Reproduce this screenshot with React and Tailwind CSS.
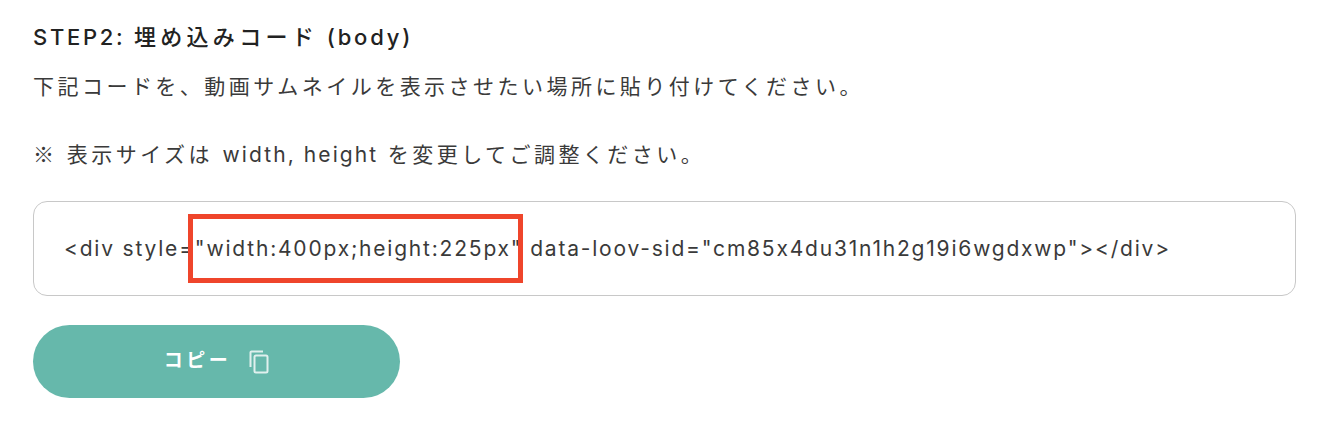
import React from "react";

const App = () => {
  return (
    <div className="w-[1328px] h-[430px] bg-white pl-[33px] pr-[32px] pt-[22px] text-[#3a3a3a] font-['Inter','Noto_Sans_CJK_JP',sans-serif] overflow-hidden">
      <h2 className="text-[22px] leading-[30px] font-medium text-[#222]">
        <span className="tracking-[2.7px]">STEP2: </span>
        <span className="tracking-[4.3px]">埋め込みコード</span>
        <span className="tracking-[2.8px]"> (body)</span>
      </h2>
      <p className="mt-[21px] text-[21px] leading-[28px] tracking-[3.47px]">
        下記コードを、動画サムネイルを表示させたい場所に貼り付けてください。
      </p>
      <p className="mt-[38px] h-[28px] text-[21px] leading-[28px] tracking-[3.47px]">
        <span className="font-['Noto_Sans_CJK_JP',sans-serif]">※</span> 表示サイズは <span className="tracking-[2.1px]">width, height</span> を変更してご調整ください。
      </p>
      <div className="relative mt-[34px] h-[95px] border border-[#c8c8c8] rounded-[14px] pl-[30px] flex items-center">
        <code className="font-['Inter','Noto_Sans_CJK_JP',sans-serif] text-[21px] tracking-[1.8px] whitespace-nowrap">
          {'<div style="width:400px;height:225px" data-loov-sid="cm85x4du31n1h2g19i6wgdxwp"></div>'}
        </code>
        <div className="absolute left-[154px] top-[12px] w-[335px] h-[69px] border-[5px] border-[#ef452b]"></div>
      </div>
      <button
        type="button"
        className="mt-[29px] w-[367px] h-[73px] rounded-full bg-[#66b8ab] text-white flex items-center justify-center gap-[18px] text-[19px] font-bold tracking-[3.5px]"
      >
        <span>コピー</span>
        <svg width="20" height="24" viewBox="0 0 20 24" fill="none" stroke="currentColor" strokeWidth="2" className="opacity-80">
          <path d="M14 1.5H2.5a1 1 0 0 0-1 1V17" />
          <rect x="5.5" y="5.5" width="13" height="17" rx="1.5" />
        </svg>
      </button>
    </div>
  );
};

export default App;
